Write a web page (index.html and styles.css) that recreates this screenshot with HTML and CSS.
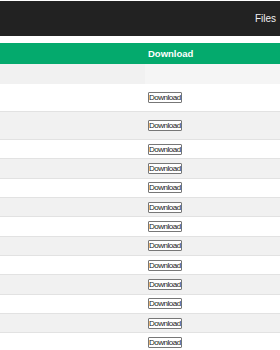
FILE: index.html
```html
<!DOCTYPE html>
<html lang="en">
<head>
  <meta charset="UTF-8" />
  <meta name="viewport" content="width=device-width, initial-scale=1.0"/>
  <title>Files</title>
  <link rel="stylesheet" href="styles.css">
</head>
<body>
  <div class="topnav">
    <span class="nav-item">Files</span>
  </div>

  <table class="files">
    <thead>
      <tr>
        <th class="name-col"></th>
        <th>Download</th>
      </tr>
    </thead>
    <tbody>
      <tr class="blank"><td></td><td class="blank-cell"></td></tr>
      <tr class="tall"><td></td><td><button>Download</button></td></tr>
      <tr class="tall"><td></td><td><button>Download</button></td></tr>
      <tr><td></td><td><button>Download</button></td></tr>
      <tr><td></td><td><button>Download</button></td></tr>
      <tr><td></td><td><button>Download</button></td></tr>
      <tr><td></td><td><button>Download</button></td></tr>
      <tr><td></td><td><button>Download</button></td></tr>
      <tr><td></td><td><button>Download</button></td></tr>
      <tr><td></td><td><button>Download</button></td></tr>
      <tr><td></td><td><button>Download</button></td></tr>
      <tr><td></td><td><button>Download</button></td></tr>
      <tr><td></td><td><button>Download</button></td></tr>
      <tr><td></td><td><button>Download</button></td></tr>
    </tbody>
  </table>
</body>
</html>
```

FILE: styles.css
```css
body {
  font-family: "Liberation Sans", Arial, sans-serif;
  background: white;
  margin: 0;
  padding-top: 1px;
}
.topnav {
  background: #222;
  height: 35px;
  display: flex;
  align-items: center;
  justify-content: flex-end;
  padding-right: 4px;
}
.nav-item {
  color: #f0f0f0;
  font-size: 10px;
}
.files {
  width: 100%;
  margin-top: 7px;
  border-collapse: collapse;
}
.files th {
  background: #04aa6d;
  color: white;
  font-size: 9.5px;
  text-align: left;
  height: 21px;
  padding: 0 3px;
}
.name-col {
  width: 139px;
}
.files td {
  height: 18.35px;
  padding: 0 3px;
  border-bottom: 1px solid #e2e2e2;
  vertical-align: middle;
}
.files tbody tr:nth-child(odd) {
  background: #f1f1f1;
}
.files tr.blank td {
  height: 20px;
  border-bottom: none;
}
.files td.blank-cell {
  background: #f5f5f5;
}
.files tr.tall td {
  height: 27px;
}
button {
  font-family: "Liberation Sans", Arial, sans-serif;
  font-size: 8px;
  letter-spacing: -0.5px;
  line-height: 9px;
  height: 11px;
  padding: 0;
  background: white;
  color: #222;
  border: 1px solid #777;
  border-radius: 1px;
  display: block;
  white-space: nowrap;
}
```
